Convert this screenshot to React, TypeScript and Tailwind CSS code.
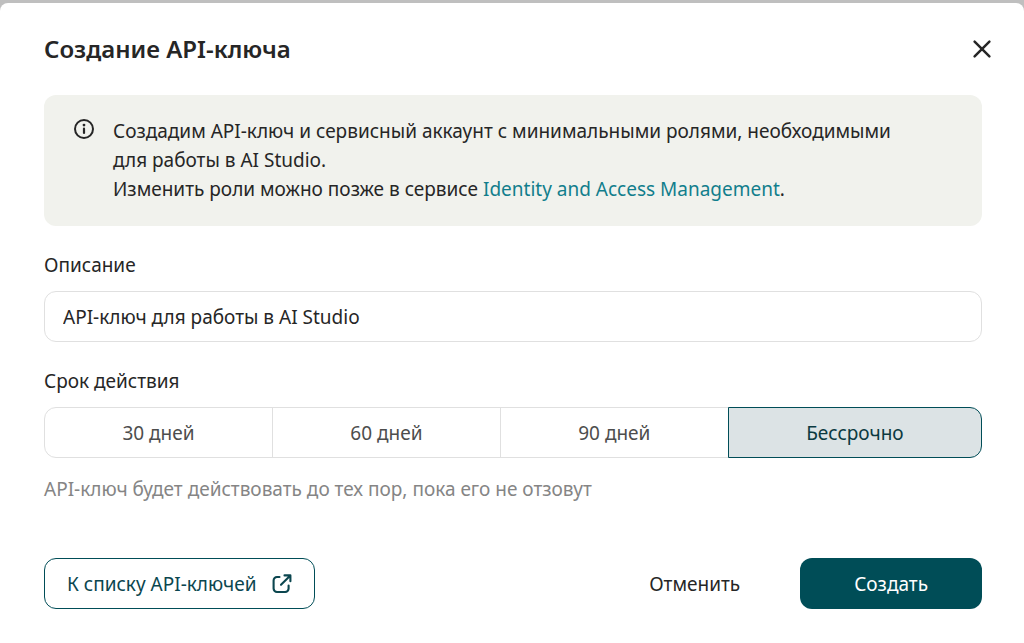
import { useState } from "react";
import clsx from "clsx";

const periods = ["30 дней", "60 дней", "90 дней", "Бессрочно"];

const InfoIcon = () => (
  <svg className="mt-0.5 size-5 shrink-0" viewBox="0 0 20 20" fill="none" aria-hidden="true">
    <circle cx="10" cy="10" r="9" stroke="currentColor" strokeWidth="2" />
    <circle cx="10" cy="6.1" r="1.4" fill="currentColor" />
    <path d="M10 9.7v4.3" stroke="currentColor" strokeWidth="2.2" strokeLinecap="round" />
  </svg>
);

const CloseIcon = () => (
  <svg className="size-5" viewBox="0 0 20 20" fill="none" aria-hidden="true">
    <path d="M2.6 2.6l14.8 14.8M17.4 2.6l-14.8 14.8" stroke="currentColor" strokeWidth="2.5" strokeLinecap="round" />
  </svg>
);

const ExternalIcon = () => (
  <svg
    className="size-5"
    viewBox="0 0 20 20"
    fill="none"
    stroke="currentColor"
    strokeWidth="2.1"
    strokeLinecap="round"
    strokeLinejoin="round"
    aria-hidden="true"
  >
    <path d="M7.5 3H5a3.4 3.4 0 0 0-3.4 3.4v8.2A3.4 3.4 0 0 0 5 18h8.2a3.4 3.4 0 0 0 3.4-3.4V11.5" />
    <path d="M12.5 1.4h5.9v5.9M18.1 1.7L9 10.8" />
  </svg>
);

const App = () => {
  const [description, setDescription] = useState("API-ключ для работы в AI Studio");
  const [period, setPeriod] = useState("Бессрочно");

  return (
    <div className="min-h-screen bg-[#bfbfbf] pt-[3px] font-['Noto_Sans',sans-serif] text-[19px] leading-7 text-[#262626]">
      <main
        role="dialog"
        aria-labelledby="dialog-title"
        className="flex min-h-[calc(100vh-3px)] flex-col rounded-t-lg bg-white pt-7 pr-[42px] pb-[34px] pl-11"
      >
        {/* Header */}
        <header className="flex items-center justify-between">
          <h1 id="dialog-title" className="text-2xl leading-9 font-semibold">
            Создание API-ключа
          </h1>
          <button type="button" aria-label="Закрыть" className="-mr-[10px]">
            <CloseIcon />
          </button>
        </header>

        {/* Notice */}
        <div className="mt-7 flex gap-[19px] rounded-xl bg-[#f1f2ed] px-[30px] py-[22px]">
          <InfoIcon />
          <p className="leading-[29px]">
            Создадим API-ключ и сервисный аккаунт с минимальными ролями, необходимыми
            <br />
            для работы в AI Studio.
            <br />
            Изменить роли можно позже в сервисе{" "}
            <a href="#iam" className="text-[#117e8c]">
              Identity and Access Management
            </a>
            .
          </p>
        </div>

        <form className="flex grow flex-col" onSubmit={(e) => e.preventDefault()}>
          <label htmlFor="description" className="mt-[25px]">
            Описание
          </label>
          <input
            id="description"
            type="text"
            value={description}
            onChange={(e) => setDescription(e.target.value)}
            className="mt-3 h-[51px] rounded-xl border border-[#e0e0e0] px-[18px] outline-none"
          />

          {/* Lifetime */}
          <fieldset className="mt-[25px]">
            <legend className="mb-3">Срок действия</legend>
            <div className="flex h-[51px]">
              {periods.map((item) => (
                <label
                  key={item}
                  className={clsx(
                    "flex flex-auto cursor-pointer items-center justify-center border first:rounded-l-xl last:rounded-r-xl not-first:-ml-px",
                    item === period
                      ? "z-10 border-[#004d57] bg-[#dce3e5] text-[#0b3a41]"
                      : "border-[#e0e0e0] text-[#4d4d4d]"
                  )}
                >
                  <input
                    type="radio"
                    name="period"
                    value={item}
                    checked={item === period}
                    onChange={() => setPeriod(item)}
                    className="sr-only"
                  />
                  {item}
                </label>
              ))}
            </div>
          </fieldset>
          <p className="mt-[17px] text-[#858585]">API-ключ будет действовать до тех пор, пока его не отзовут</p>

          {/* Actions */}
          <footer className="mt-auto flex items-center justify-between">
            <a
              href="#keys"
              className="flex h-[51px] items-center gap-4 rounded-xl border border-[#004d57] px-[22px] text-[#0b464f]"
            >
              К списку API-ключей
              <ExternalIcon />
            </a>
            <div className="flex items-center">
              <button type="button" className="h-[51px] px-[60px]">
                Отменить
              </button>
              <button type="submit" className="h-[51px] rounded-xl bg-[#004d57] px-[54px] text-white">
                Создать
              </button>
            </div>
          </footer>
        </form>
      </main>
    </div>
  );
};

export default App;
